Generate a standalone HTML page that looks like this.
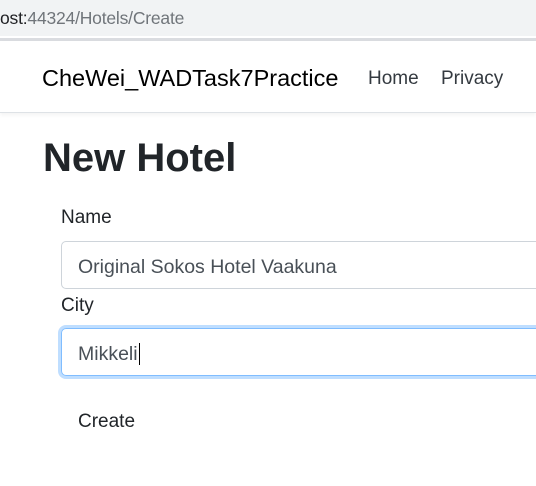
<!DOCTYPE html><html><head><style>
*{margin:0;padding:0;box-sizing:border-box}
body{width:536px;height:486px;overflow:hidden;background:#fff;font-family:"Liberation Sans",sans-serif;color:#212529;position:relative}
.addr{position:absolute;left:0;top:0;width:536px;height:36px;background:#f1f3f4;font-size:17.5px;color:#70757a;padding:8px 0 0 0;letter-spacing:-0.2px}
.addr b{font-weight:normal;color:#202124}
.sep{position:absolute;top:38px;left:0;width:536px;height:3px;background:#dadce0}
.nav{position:absolute;top:41px;left:0;width:536px;height:72px;background:#fff;border-bottom:1px solid #dee2e6;box-shadow:0 2px 4px rgba(0,0,0,.05)}
.brand{position:absolute;left:42px;top:24px;font-size:23.5px;color:#000}
.l{position:absolute;top:27px;font-size:19px;color:#343a40}
h1{position:absolute;left:43px;top:136px;font-size:40px;font-weight:bold}
.lab{position:absolute;left:61px;font-size:19px}
.in{position:absolute;left:61px;width:490px;height:48px;border:1px solid #ced4da;border-radius:5px;font-size:19.5px;color:#495057;padding:14px 0 0 16px}
.f{border-color:#80bdff;box-shadow:0 0 0 3px rgba(0,123,255,.25)}
</style></head><body>
<div class="addr"><b>ost:</b>44324/Hotels/Create</div>
<div class="sep"></div>
<div class="nav"><span class="brand">CheWei_WADTask7Practice</span><span class="l" style="left:368px">Home</span><span class="l" style="left:441px">Privacy</span></div>
<h1>New Hotel</h1>
<div class="lab" style="top:207px">Name</div>
<div class="in" style="top:241px">Original Sokos Hotel Vaakuna</div>
<div class="lab" style="top:295px">City</div>
<div class="in f" style="top:328px">Mikkeli<span style="border-left:1px solid #000;margin-left:1px"></span></div>
<div class="lab" style="left:78px;top:411px">Create</div>
</body></html>
